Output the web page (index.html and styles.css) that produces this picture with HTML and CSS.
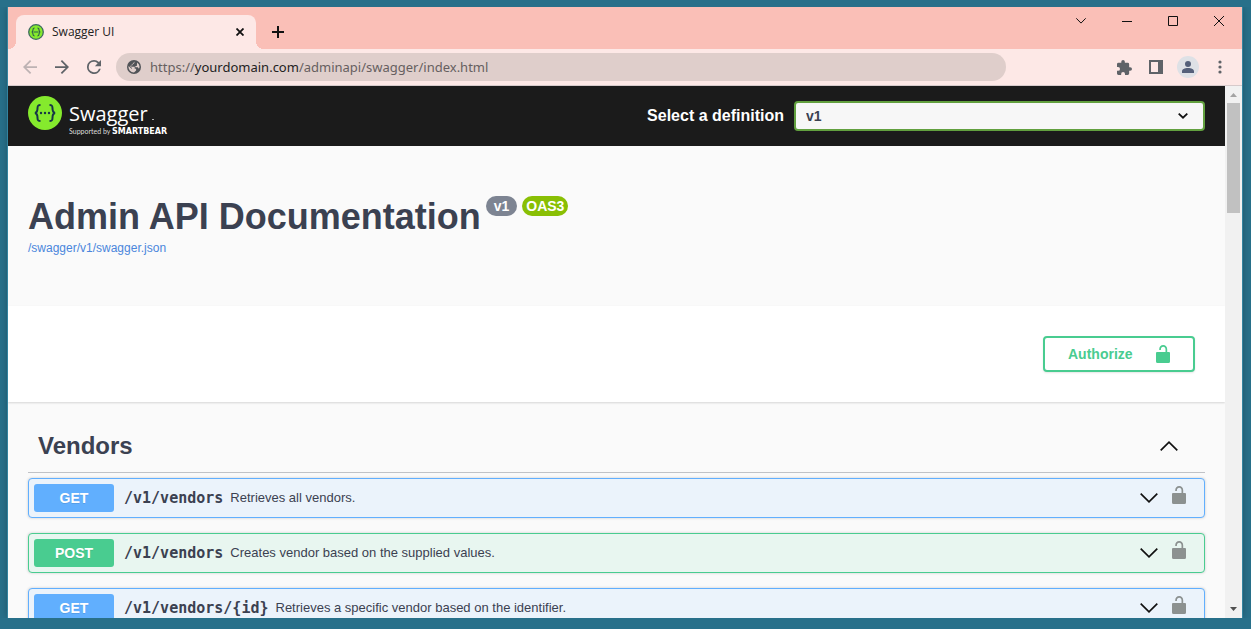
FILE: index.html
```html
<!DOCTYPE html>
<html lang="en">
<head>
<meta charset="utf-8">
<title>Swagger UI</title>
<link rel="stylesheet" href="styles.css">
</head>
<body>
<svg class="symbols" aria-hidden="true">
  <symbol id="unlocked" viewBox="0 0 14 18"><path d="M1 7h8.500V4.200C9.500 2.700 8.600 1.700 7.200 1.700S4.900 2.700 4.900 4.300V5H3.200V4.200C3.200 1.800 4.800 0 7.200 0s4 1.800 4 4.200V7H13q1 0 1 1v8.500Q14 18 12.500 18h-11Q0 18 0 16.500V8q0-1 1-1z"/></symbol>
  <symbol id="chevron" viewBox="0 0 18 10"><path d="M.7.7 9 8.800 17.300.7" fill="none" stroke="currentColor" stroke-width="1.700"/></symbol>
</svg>
<div class="window">
  <header class="titlebar">
    <div class="tab">
      <svg class="tab-icon" viewBox="0 0 34 34"><circle cx="17" cy="17" r="15.500" fill="#85ea2d" stroke="#3f6b60" stroke-width="2.800"/><path d="M14 8.500c-3 0-3.500 1-3.500 4 0 3-.3 4-2.500 4.500 2.200.5 2.500 1.500 2.500 4.500s.5 4 3.500 4M20 8.500c3 0 3.500 1 3.500 4 0 3 .3 4 2.500 4.500-2.200.5-2.500 1.500-2.500 4.500s-.5 4-3.500 4M12 17h10" fill="none" stroke="#2f5a4c" stroke-width="2.400"/></svg>
      <span class="tab-title">Swagger UI</span>
      <button class="plain tab-close" aria-label="Close tab"><svg width="8" height="8" viewBox="0 0 8 8"><path d="m.5.5 7 7m0-7-7 7" stroke="#111" stroke-width="1.800"/></svg></button>
    </div>
    <button class="plain new-tab" aria-label="New tab"><svg width="12" height="12" viewBox="0 0 12 12"><path d="M6 0v12M0 6h12" stroke="#111" stroke-width="2"/></svg></button>
    <div class="window-buttons">
      <button class="plain" aria-label="Search tabs"><svg width="10" height="6" viewBox="0 0 10 6"><path d="m.3.3 4.700 4.800L9.700.3" fill="none" stroke="#111"/></svg></button>
      <button class="plain" aria-label="Minimize"><svg width="10" height="10" viewBox="0 0 10 10"><path d="M0 5.500h10" stroke="#111"/></svg></button>
      <button class="plain" aria-label="Maximize"><svg width="10" height="10" viewBox="0 0 10 10"><path d="M.5.5h9v9h-9z" fill="none" stroke="#111"/></svg></button>
      <button class="plain" aria-label="Close"><svg width="10" height="10" viewBox="0 0 10 10"><path d="m0 0 10 10M10 0 0 10" stroke="#111"/></svg></button>
    </div>
  </header>
  <nav class="toolbar" aria-label="Browser">
    <div class="tools">
      <button class="plain back" aria-label="Back"><svg width="14" height="14" viewBox="4 4 16 16"><path d="M20 11H7.830l5.590-5.590L12 4l-8 8 8 8 1.410-1.410L7.830 13H20z"/></svg></button>
      <button class="plain" aria-label="Forward"><svg width="14" height="14" viewBox="4 4 16 16"><path d="m12 4-1.410 1.410L16.170 11H4v2h12.170l-5.580 5.590L12 20l8-8z"/></svg></button>
      <button class="plain" aria-label="Reload"><svg width="14" height="14" viewBox="4 4 16 16"><path d="M17.650 6.350A7.960 7.960 0 0 0 12 4a8 8 0 1 0 7.730 10h-2.080A6 6 0 1 1 12 6c1.660 0 3.140.69 4.220 1.780L13 11h7V4z"/></svg></button>
    </div>
    <div class="address">
      <svg width="14" height="14" viewBox="2 2 20 20"><circle cx="12" cy="12" r="10" fill="#505357"/><path d="M13 4.100 12 7.500h-2v2H8v2h5v3h2v2.500l-3 3A8 8 0 0 1 4.200 10.500L9 15v-1.500L6.500 11zM16.500 5.500A8 8 0 0 1 20 12l-1 2.500-1.500-2H14v-2h2z" fill="#dfcecb"/></svg>
      <span class="url">https://<span class="host">yourdomain.com</span>/adminapi/swagger/index.html</span>
    </div>
    <div class="tools extras">
      <button class="plain" aria-label="Extensions"><svg width="15" height="15" viewBox="2 1 21 21"><path d="M20.500 11H19V7a2 2 0 0 0-2-2h-4V3.500a2.500 2.500 0 0 0-5 0V5H4a2 2 0 0 0-2 2v3.800h1.500a2.700 2.700 0 0 1 0 5.400H2V20a2 2 0 0 0 2 2h3.800v-1.500a2.700 2.700 0 0 1 5.400 0V22H17a2 2 0 0 0 2-2v-4h1.500a2.500 2.500 0 0 0 0-5z"/></svg></button>
      <button class="plain" aria-label="Side panel"><svg width="14" height="14" viewBox="0 0 14 14"><path fill-rule="evenodd" d="M0 0h14v14H0zM2 2v10h7V2z"/></svg></button>
      <button class="plain" aria-label="Profile"><svg width="22" height="22" viewBox="0 0 22 22"><circle cx="11" cy="11" r="11" fill="#dee1e6"/><path d="M11 11a3 3 0 1 0 0-6 3 3 0 0 0 0 6zm0 1c-3.500 0-6 1.300-6 3.200V17h12v-1.800C17 13.300 14.500 12 11 12z" fill="#55607a"/></svg></button>
      <button class="plain" aria-label="Menu"><svg width="4" height="14" viewBox="0 0 4 14"><circle cx="2" cy="2" r="1.600"/><circle cx="2" cy="7" r="1.600"/><circle cx="2" cy="12" r="1.600"/></svg></button>
    </div>
  </nav>
  <div class="viewport">
    <main class="page">
      <div class="topbar">
        <a class="logo" href="#" aria-label="Swagger">
          <svg width="142" height="44" viewBox="0 0 142 44">
            <circle cx="17" cy="17" r="17" fill="#85ea2d"/>
            <path d="M12.500 9c-2.500 0-3 .8-3 3.300 0 3-.3 4.200-2.500 4.700 2.200.5 2.500 1.700 2.500 4.700 0 2.500.5 3.300 3 3.300M21.500 9c2.500 0 3 .8 3 3.300 0 3 .3 4.200 2.500 4.700-2.200.5-2.500 1.700-2.500 4.700 0 2.500-.5 3.300-3 3.300" fill="none" stroke="#173647" stroke-width="2"/>
            <g fill="#173647"><circle cx="13" cy="17" r="1.200"/><circle cx="17" cy="17" r="1.200"/><circle cx="21" cy="17" r="1.200"/></g>
            <text class="logo-name" x="41" y="25">Swagger</text>
            <path d="M124 23.500h2" stroke="#aaa"/>
            <text class="logo-by" x="41" y="38">Supported by</text>
            <text class="logo-brand" x="84" y="38">SMARTBEAR</text>
          </svg>
        </a>
        <label class="definition-label" for="definition">Select a definition</label>
        <div class="select-wrap">
          <select id="definition"><option>v1</option></select>
          <svg class="select-arrow" width="10" height="6" viewBox="0 0 10 6"><path d="m.7.7 4.300 4 4.300-4" fill="none" stroke="#111" stroke-width="1.800"/></svg>
        </div>
      </div>
      <section class="info">
        <div class="heading"><h1>Admin API Documentation</h1><span class="pill">v1</span><span class="pill oas">OAS3</span></div>
        <a class="spec" href="#">/swagger/v1/swagger.json</a>
      </section>
      <section class="auth">
        <button class="authorize"><span>Authorize</span><svg width="14" height="18"><use href="#unlocked"/></svg></button>
      </section>
      <section class="operations">
        <div class="group"><h2>Vendors</h2><button class="plain" aria-label="Collapse Vendors"><svg class="up" width="18" height="10"><use href="#chevron"/></svg></button></div>
        <div class="list">
          <article class="operation get"><span class="method">GET</span><span class="path">/v1/vendors</span><span class="summary">Retrieves all vendors.</span>
            <button class="plain" aria-label="Expand"><svg width="18" height="10"><use href="#chevron"/></svg></button><button class="plain lock" aria-label="Authorization"><svg width="14" height="18"><use href="#unlocked"/></svg></button></article>
          <article class="operation post"><span class="method">POST</span><span class="path">/v1/vendors</span><span class="summary">Creates vendor based on the supplied values.</span>
            <button class="plain" aria-label="Expand"><svg width="18" height="10"><use href="#chevron"/></svg></button><button class="plain lock" aria-label="Authorization"><svg width="14" height="18"><use href="#unlocked"/></svg></button></article>
          <article class="operation get"><span class="method">GET</span><span class="path">/v1/vendors/{id}</span><span class="summary">Retrieves a specific vendor based on the identifier.</span>
            <button class="plain" aria-label="Expand"><svg width="18" height="10"><use href="#chevron"/></svg></button><button class="plain lock" aria-label="Authorization"><svg width="14" height="18"><use href="#unlocked"/></svg></button></article>
        </div>
      </section>
    </main>
    <div class="scrollbar">
      <svg width="17" height="17" viewBox="0 0 17 17"><path d="m5 11 3.500-4 3.500 4z" fill="#a3a3a3"/></svg>
      <div class="track"><div class="thumb"></div></div>
      <svg width="17" height="17" viewBox="0 0 17 17"><path d="m5 6 3.500 4L12 6z" fill="#505050"/></svg>
    </div>
  </div>
</div>
</body>
</html>
```
FILE: styles.css
```css
* { box-sizing: border-box; }

body {
  margin: 0;
  height: 100vh;
  padding: 7px 9px 11px 8px;
  overflow: hidden;
  background: #28708a;
  font-family: "Liberation Sans", Arial, sans-serif;
  color: #3b4151;
}

svg { display: block; flex: none; }
.symbols { position: absolute; width: 0; height: 0; }

.plain {
  display: flex;
  align-items: center;
  justify-content: center;
  padding: 0;
  border: 0;
  background: none;
  color: #111;
  fill: #5f6368;
}

.window {
  display: flex;
  flex-direction: column;
  height: 100%;
  background: #fde8e6;
  box-shadow: 0 0 0 1px #3384a0, 0 0 8px rgba(0, 0, 0, 0.3);
  clip-path: inset(0 -9px 0 -8px);
}

.titlebar {
  display: flex;
  height: 42px;
  flex: none;
  padding-left: 8px;
  background: #fabfb7;
}

.tab {
  position: relative;
  display: flex;
  align-items: center;
  width: 240px;
  margin-top: 8px;
  padding: 0 12px;
  border-radius: 8px 8px 0 0;
  background: #fde8e6;
  font: 12px/16px "Open Sans", "Noto Sans", sans-serif;
  color: #222;
}

.tab::before,
.tab::after {
  content: "";
  position: absolute;
  bottom: 0;
  width: 8px;
  height: 8px;
}

.tab::before { left: -8px; background: radial-gradient(circle at 0 0, #fabfb7 8px, #fde8e6 8px); }
.tab::after { right: -8px; background: radial-gradient(circle at 100% 0, #fabfb7 8px, #fde8e6 8px); }

.tab-icon { width: 16px; height: 16px; margin-right: 8px; }
.tab-title { flex: 1; }
.new-tab { width: 44px; padding-top: 8px; }
.window-buttons { display: flex; height: 28px; margin-left: auto; }
.window-buttons button { width: 46px; }

.toolbar {
  display: flex;
  align-items: center;
  height: 37px;
  flex: none;
  padding: 0 6px;
  border-bottom: 1px solid #d6cacb;
}

.tools { display: flex; }
.tools button { width: 32px; height: 32px; }
.back { opacity: 0.4; }
.extras { margin-left: 102px; }

.address {
  display: flex;
  flex: 1;
  align-items: center;
  gap: 9px;
  height: 28px;
  margin-left: 6px;
  padding: 0 11px;
  border-radius: 14px;
  background: #dfcecb;
}

.url { font: 13px/20px "Noto Sans", "Open Sans", sans-serif; color: #665f60; white-space: nowrap; }
.host { color: #222; }

.viewport { display: flex; flex: 1; min-height: 0; }
.page { flex: 1; min-width: 0; overflow: hidden; background: #fafafa; }

.scrollbar { display: flex; flex-direction: column; width: 17px; background: #f1f1f1; }
.track { flex: 1; padding: 0 2px; }
.thumb { height: 22%; background: #c1c1c1; }

.topbar {
  display: flex;
  align-items: center;
  height: 60px;
  padding: 0 20px;
  background: #1b1b1b;
}

.logo { padding-top: 4px; }
.logo-name { font: 400 20px "Open Sans", sans-serif; fill: #fff; }
.logo-by { font: 7px Lato, sans-serif; fill: #ddd; }
.logo-brand { font: 700 8px "DejaVu Sans", sans-serif; fill: #fff; }

.definition-label {
  margin-left: auto;
  margin-right: 10px;
  color: #fff;
  font-size: 16px;
  font-weight: 700;
  white-space: nowrap;
}

.select-wrap { position: relative; width: 35%; max-width: 411px; }
.select-wrap select {
  display: block;
  appearance: none;
  width: 100%;
  height: 30px;
  padding: 0 10px;
  border: 2px solid #62a03f;
  border-radius: 4px;
  background: #f7f7f7;
  font: 700 14px "Liberation Sans", Arial, sans-serif;
  color: #3b4151;
}
.select-arrow { position: absolute; right: 17px; top: 12px; pointer-events: none; }

.info { height: 160px; padding: 50px 20px 0; }
.heading { display: flex; align-items: flex-start; gap: 5px; }
h1 { margin: 0; font-size: 36px; line-height: 41px; }

.pill {
  padding: 2px 8px;
  border-radius: 10px;
  background: #7d8492;
  color: #fff;
  font-size: 14px;
  font-weight: 700;
  line-height: 16px;
}
.oas { padding: 2px 4px; background: #89bf04; }
.spec { display: inline-block; margin-top: 3px; font-size: 12px; line-height: 16px; color: #4a86dc; text-decoration: none; }

.auth {
  display: flex;
  justify-content: flex-end;
  padding: 30px;
  background: #fff;
  box-shadow: 0 1px 2px rgba(0, 0, 0, 0.15);
}

.authorize {
  display: flex;
  align-items: center;
  justify-content: space-between;
  width: 152px;
  height: 36px;
  padding: 0 23px;
  border: 2px solid #49cc90;
  border-radius: 4px;
  background: #fff;
  box-shadow: 0 1px 2px rgba(0, 0, 0, 0.1);
  color: #49cc90;
  fill: #49cc90;
  font: 700 14px "Liberation Sans", Arial, sans-serif;
}

.operations { padding: 18px 20px 0; }
.group {
  display: flex;
  align-items: center;
  justify-content: space-between;
  height: 53px;
  padding: 0 27px 0 10px;
  border-bottom: 1px solid #c0c2c6;
}
h2 { margin: 0; font-size: 24px; line-height: 28px; }
.up { transform: rotate(180deg); }

.list { display: flex; flex-direction: column; gap: 15px; padding-top: 5px; }
.operation {
  display: flex;
  align-items: center;
  height: 40px;
  padding: 5px 18px 5px 5px;
  border: 1px solid #61affe;
  border-radius: 4px;
  background: #ebf3fb;
  box-shadow: 0 0 3px rgba(0, 0, 0, 0.19);
}
.post { border-color: #49cc90; background: #e8f6f0; }

.method {
  width: 80px;
  border-radius: 3px;
  background: #61affe;
  color: #fff;
  font-size: 14px;
  font-weight: 700;
  line-height: 28px;
  text-align: center;
  text-shadow: 0 1px 0 rgba(0, 0, 0, 0.1);
}
.post .method { background: #49cc90; }

.path { padding: 0 7px 0 10px; font: 700 15px/28px "DejaVu Sans Mono", "Liberation Mono", monospace; }
.summary { flex: 1; font-size: 13px; line-height: 28px; }
.lock { margin-left: 14px; padding-bottom: 6px; fill: #8c9190; }
```
